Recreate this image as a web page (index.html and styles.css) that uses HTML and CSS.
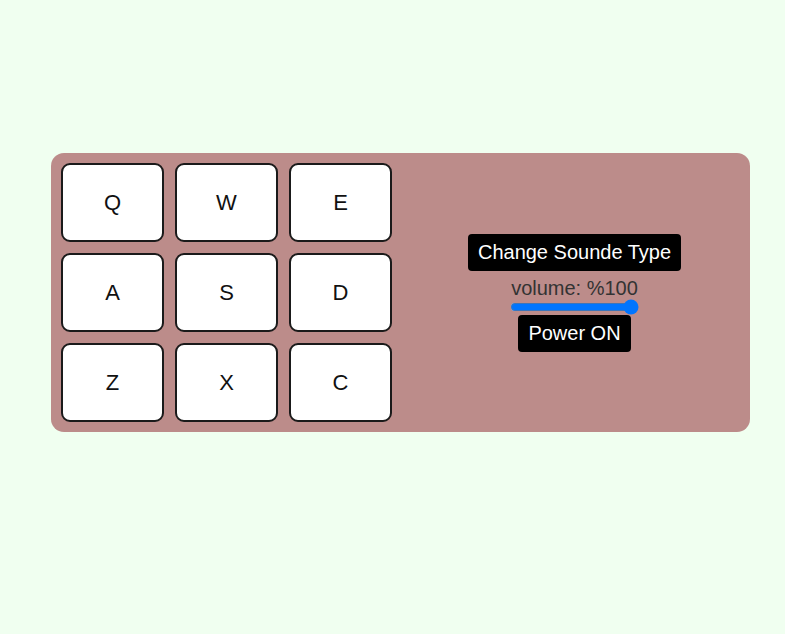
FILE: index.html
```html
<!DOCTYPE html>
<html>
<head>
<meta charset="utf-8">
<link rel="stylesheet" href="styles.css">
</head>
<body>
<div class="machine">
  <div class="pads">
    <div class="pad">Q</div>
    <div class="pad">W</div>
    <div class="pad">E</div>
    <div class="pad">A</div>
    <div class="pad">S</div>
    <div class="pad">D</div>
    <div class="pad">Z</div>
    <div class="pad">X</div>
    <div class="pad">C</div>
  </div>
  <div class="controls">
    <button class="btn">Change Sounde Type</button>
    <div class="volume">volume: %100</div>
    <input class="slider" type="range" min="0" max="100" value="100">
    <button class="btn">Power ON</button>
  </div>
</div>
</body>
</html>
```
FILE: styles.css
```css
html, body {
  margin: 0;
  padding: 0;
}
body {
  background: #f0fff0;
  font-family: "Liberation Sans", Arial, sans-serif;
  padding-top: 153px;
  padding-left: 51px;
  height: 634px;
  box-sizing: border-box;
}
.machine {
  width: 699px;
  height: 279px;
  box-sizing: border-box;
  background: #bc8c8a;
  border-radius: 13px;
  padding: 10px;
  display: flex;
}
.pads {
  display: grid;
  grid-template-columns: repeat(3, 103px);
  grid-auto-rows: 79px;
  gap: 11px 11px;
}
.pad {
  background: #fff;
  border: 2px solid #1a1a1a;
  border-radius: 9px;
  box-sizing: border-box;
  display: flex;
  align-items: center;
  justify-content: center;
  font-size: 22px;
  color: #111;
}
.controls {
  flex: 1;
  display: flex;
  flex-direction: column;
  align-items: center;
  justify-content: center;
  padding-left: 17px;
}
.btn {
  background: #000;
  color: #fff;
  border: none;
  border-radius: 4px;
  font-family: "Liberation Sans", Arial, sans-serif;
  font-size: 20px;
  padding: 7px 10px 7px;
  line-height: 23px;
}
.volume {
  margin-top: 7px;
  font-size: 20px;
  line-height: 20px;
  color: #333;
}
.slider {
  width: 129px;
  margin: 1px 0 0;
  height: 16px;
  accent-color: #0075ff;
}
```
